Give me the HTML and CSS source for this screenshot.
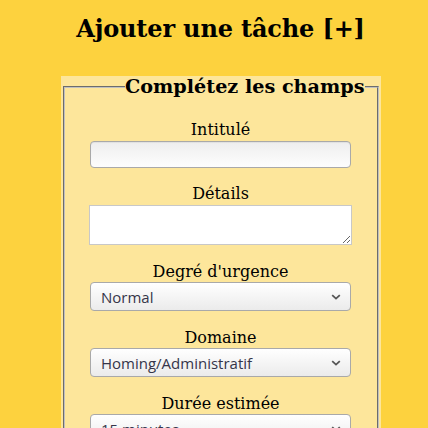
FILE: index.html
```html
<!DOCTYPE html>
<html lang="fr">
<head>
<meta charset="utf-8">
<title>Ajouter une tâche</title>
<link rel="stylesheet" href="styles.css">
</head>
<body>
<div class="page">
  <h2 class="title">Ajouter une tâche [+]</h2>
  <form class="box">
    <fieldset class="set">
      <legend class="legend">Complétez les champs</legend>
      <div class="row row-input">
        <label class="lbl" for="f1">Intitulé</label>
        <input class="inp" id="f1" type="text">
      </div>
      <div class="row row-area">
        <label class="lbl" for="f2">Détails</label>
        <textarea class="area" id="f2"></textarea>
      </div>
      <div class="row row-select">
        <label class="lbl" for="f3">Degré d'urgence</label>
        <div class="sel-wrap">
          <select class="sel" id="f3"><option>Normal</option></select>
          <svg class="chev" width="10" height="6" viewBox="0 0 10 6"><path d="M1.2 1.2 L5 4.6 L8.8 1.2" fill="none" stroke="#555" stroke-width="1.8"/></svg>
        </div>
      </div>
      <div class="row row-select">
        <label class="lbl" for="f4">Domaine</label>
        <div class="sel-wrap">
          <select class="sel" id="f4"><option>Homing/Administratif</option></select>
          <svg class="chev" width="10" height="6" viewBox="0 0 10 6"><path d="M1.2 1.2 L5 4.6 L8.8 1.2" fill="none" stroke="#555" stroke-width="1.8"/></svg>
        </div>
      </div>
      <div class="row row-select">
        <label class="lbl" for="f5">Durée estimée</label>
        <div class="sel-wrap">
          <select class="sel" id="f5"><option>15 minutes</option></select>
          <svg class="chev" width="10" height="6" viewBox="0 0 10 6"><path d="M1.2 1.2 L5 4.6 L8.8 1.2" fill="none" stroke="#555" stroke-width="1.8"/></svg>
        </div>
      </div>
    </fieldset>
  </form>
</div>
</body>
</html>
```
FILE: styles.css
```css
html, body {
  margin: 0;
  padding: 0;
}
body {
  background: #fdd23e;
  font-family: "DejaVu Serif", serif;
  font-size: 16px;
  color: #000;
  padding: 0 1px 0 14px;
  overflow: hidden;
}
.page {
  display: flex;
  flex-direction: column;
  align-items: center;
}
.title {
  font-size: 24px;
  font-weight: bold;
  line-height: 28px;
  letter-spacing: -0.15px;
  margin: 15px 0 33px;
  text-align: center;
}
.box {
  width: 320px;
  background: #fde69b;
  margin: 0;
  padding: 0 0 20px;
}
.set {
  margin: 0 2px;
  padding: 6px 12px 10px;
  border: 2px groove #c0c0c0;
  min-width: 0;
}
.legend {
  font-size: 19.2px;
  font-weight: bold;
  line-height: 22px;
  padding: 0;
  margin-left: auto;
  margin-right: 0;
}
.row {
  display: flex;
  flex-direction: column;
  align-items: center;
  margin-top: 16px;
}
.row-area, .row-select {
  margin-top: 17px;
}
.row-input + .row-area {
  margin-top: 16px;
}
.lbl {
  display: block;
  line-height: 19px;
  height: 19px;
  text-align: center;
}
.inp {
  box-sizing: border-box;
  width: 261px;
  height: 27px;
  margin-top: 2px;
  border: 1px solid #a9a9a9;
  border-radius: 4px;
  background: linear-gradient(#eeeeee, #fdfdfd);
  box-shadow: inset 0 1px 1px rgba(0,0,0,0.06);
  padding: 2px 8px;
  font: 15px "Open Sans", sans-serif;
}
.area {
  box-sizing: border-box;
  display: block;
  width: 263px;
  height: 40px;
  margin: 2px 0 0;
  border: 1px solid #c8c8c8;
  border-radius: 0;
  background: #fff;
  padding: 2px;
  font: 15px "Open Sans", sans-serif;
}
.sel-wrap {
  position: relative;
  width: 261px;
  height: 29px;
  margin-top: 1px;
}
.sel {
  -webkit-appearance: none;
  appearance: none;
  box-sizing: border-box;
  width: 261px;
  height: 29px;
  margin: 0;
  border: 1px solid #a9a9a9;
  border-radius: 4px;
  background: linear-gradient(#ffffff, #ebebeb);
  padding: 0 24px 0 10px;
  font: 15px "Open Sans", sans-serif;
  color: #35354a;
}
.chev {
  position: absolute;
  right: 10px;
  top: 12px;
  pointer-events: none;
}
```
